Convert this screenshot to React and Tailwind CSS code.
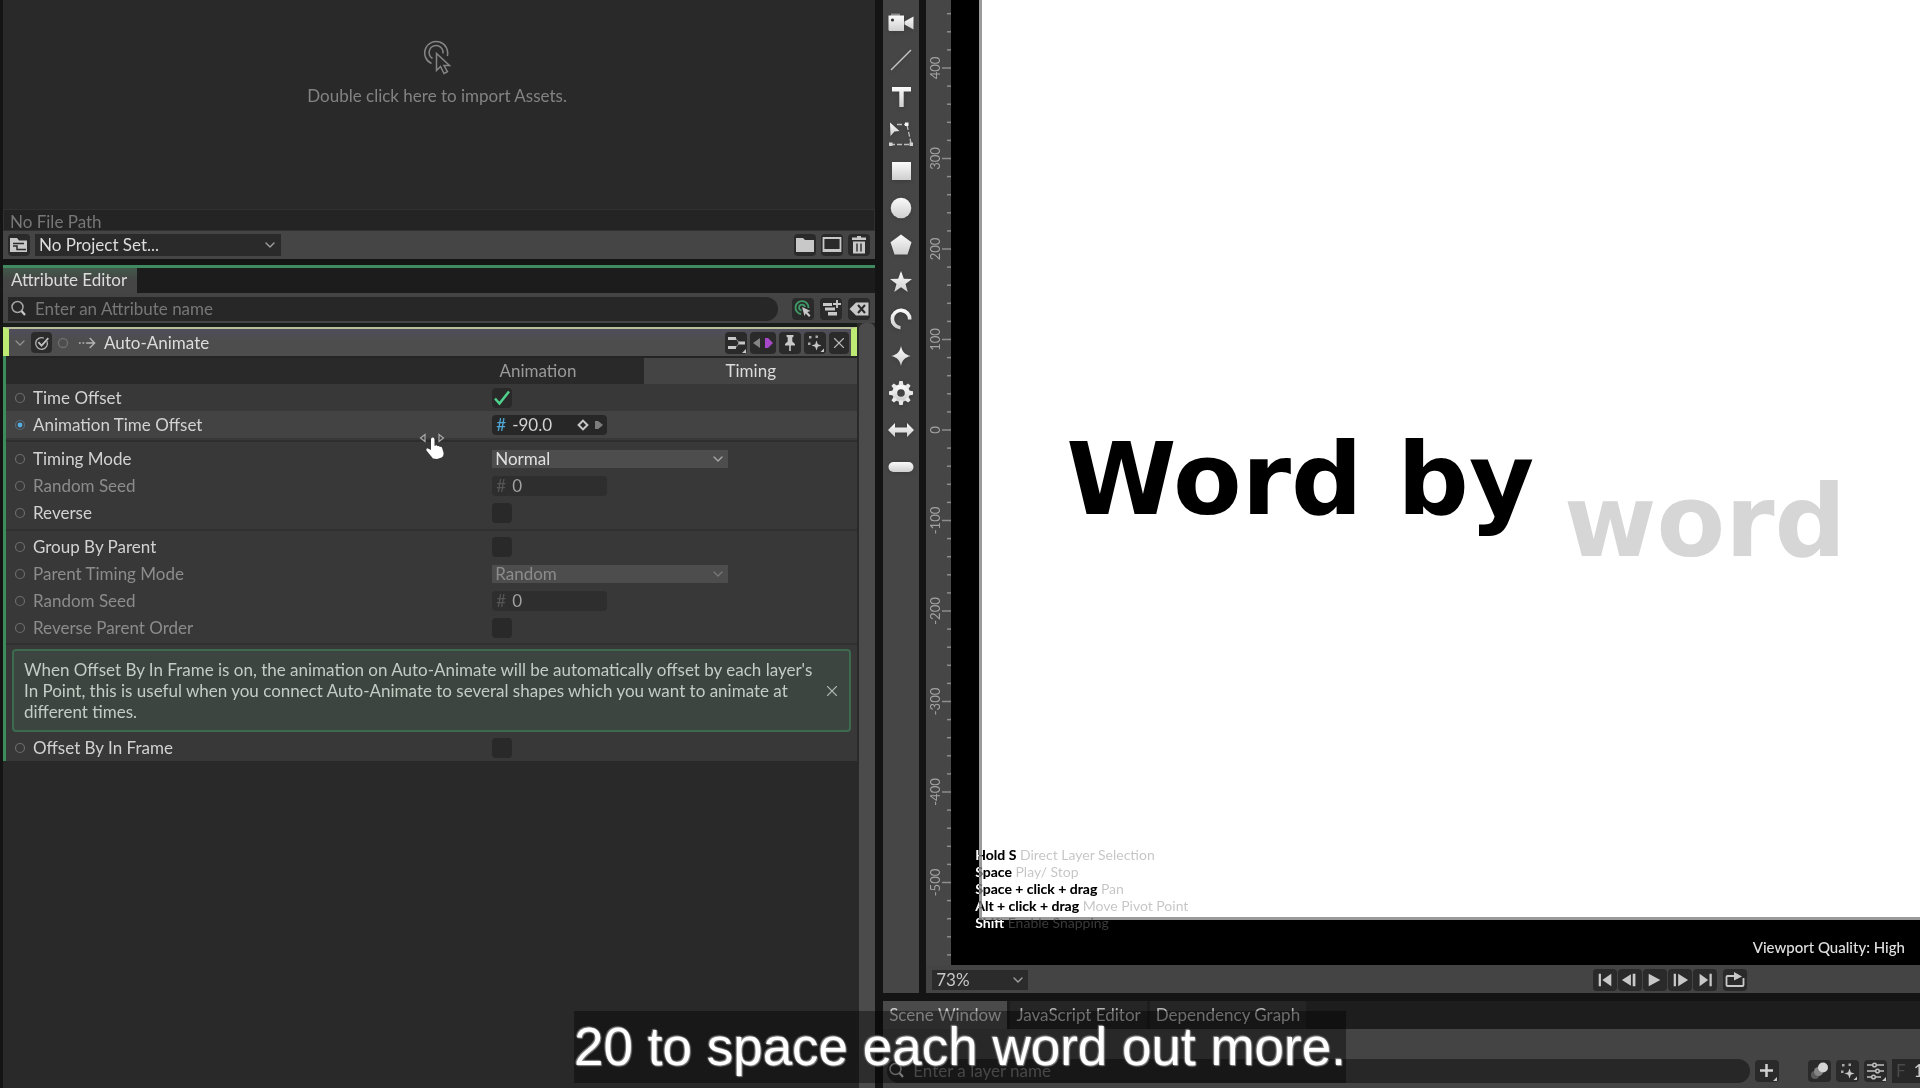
import React, { useState } from 'react';
import { ChevronDown, X } from 'lucide-react';

const hints = [
  { keys: 'Hold S', action: 'Direct Layer Selection' },
  { keys: 'Space', action: 'Play/ Stop' },
  { keys: 'Space + click + drag', action: 'Pan' },
  { keys: 'Alt + click + drag', action: 'Move Pivot Point' },
  { keys: 'Shift', action: 'Enable Snapping' },
];

const tools = [
  {
    name: 'Camera',
    shape: (
      <>
        <path d="M4 4.5h9v2.500H4z" fill="#8a8a8a" />
        <path d="M1.500 6.500h15.500v15.500H3a1.500 1.500 0 0 1-1.500-1.500z" />
        <path d="M17.500 12.500l9-5v13l-9-5z" />
        <circle cx="5.500" cy="11" r="1.600" fill="#333" />
      </>
    ),
  },
  { name: 'Line', shape: <path d="M4 24L24 4" stroke="#c4c4c4" strokeWidth="1.500" fill="none" /> },
  { name: 'Text', shape: <path d="M5 4h19v4.500h-7.300V24h-4.400V8.500H5z" /> },
  {
    name: 'Edit Shape',
    shape: (
      <>
        <path d="M3 2.500l9.500 8.500-5 .600L3.500 16z" />
        <path d="M10 4.500h8M20 5l4 18M3 24.500h21" stroke="#bdbdbd" strokeWidth="1.300" strokeDasharray="5 2" fill="none" />
        <path d="M18 2.500h3.500V6H18zM2 22.500h3.500V26H2zM22.500 22.500H26V26h-3.500z" />
      </>
    ),
  },
  { name: 'Rectangle', shape: <path d="M5 5h19v18H5z" /> },
  { name: 'Ellipse', shape: <circle cx="14" cy="14" r="10.300" /> },
  { name: 'Polygon', shape: <path d="M14 3.500l10.500 7.800-4 12.200h-13l-4-12.200z" /> },
  { name: 'Star', shape: <path d="M14 3l2.800 7.700 8.200.200-6.500 5 2.300 8L14 19.300 7.200 23.900l2.300-8-6.500-5 8.200-.200z" /> },
  {
    name: 'Arc',
    shape: <path d="M13.500 22.700A8.700 8.700 0 1 1 22.700 14.500" stroke="url(#toolFill)" strokeWidth="3.600" fill="none" />,
  },
  { name: 'Super Ellipse', shape: <path d="M14 4c1.200 5.500 3.500 8.600 9.800 10-6.300 1.400-8.600 4.500-9.800 10-1.200-5.500-3.500-8.600-9.800-10C10.500 12.600 12.800 9.500 14 4z" /> },
  {
    name: 'Cogwheel',
    shape: (
      <>
        <circle cx="14" cy="14" r="6.300" fill="none" stroke="url(#toolFill)" strokeWidth="5" />
        <path
          d="M12.300 2h3.400l.8 4.500h-5zM12.300 26h3.400l.8-4.500h-5zM2 12.300v3.400l4.500.8v-5zM26 12.300v3.400l-4.500.8v-5zM4.400 6.800l2.400-2.400 3.700 2.600-3.500 3.500zM23.600 6.800l-2.400-2.400-3.700 2.600 3.500 3.500zM4.400 21.200l2.400 2.400 3.700-2.600-3.500-3.500zM23.600 21.200l-2.400 2.400-3.700-2.600 3.500-3.500z"
          fill="#e9e9e9"
        />
      </>
    ),
  },
  { name: 'Arrow', shape: <path d="M1 14l7-7v4.500h12V7l7 7-7 7v-4.500H8V21z" /> },
  { name: 'Capsule', shape: <rect x="1.500" y="9" width="25" height="10" rx="5" /> },
];

const Icon = ({ children, size = 20, className = '' }) => (
  <svg width={size} height={size} viewBox="0 0 20 20" fill="#c8c8c8" className={`shrink-0 ${className}`} aria-hidden="true">
    {children}
  </svg>
);

const IconButton = ({ label, children, className = 'w-[22px]' }) => (
  <button
    type="button"
    aria-label={label}
    className={`flex h-[22px] shrink-0 items-center justify-center rounded bg-[#2a2a2a] hover:bg-[#333] ${className}`}
  >
    {children}
  </button>
);

const SparkleIcon = () => (
  <Icon>
    <path d="M4 3h2.500v2.500H4zM10.500 2.500H13V5h-2.500zM3 9.500h2.500V12H3z" fill="#a8a8a8" />
    <path d="M11.500 7.500l1.300 3.700 3.700 1.300-3.700 1.300-1.300 3.700-1.300-3.700-3.700-1.300 3.700-1.300z" />
    <path d="M19 15.500V19h-3.500z" />
  </Icon>
);

const SearchIcon = () => (
  <Icon>
    <circle cx="8.500" cy="8" r="5.500" fill="none" stroke="#a5a5a5" strokeWidth="1.500" />
    <path d="M12.500 12l3.500 4" stroke="#c8c8c8" strokeWidth="2.200" />
  </Icon>
);

const PortDot = ({ connected }) => (
  <Icon size={12}>
    <circle cx="10" cy="10" r="7.500" fill="none" stroke={connected ? '#52697a' : '#6c6c6c'} strokeWidth="2" />
    {connected && <circle cx="10" cy="10" r="4" fill="#55aee0" />}
  </Icon>
);

const Row = ({ id, label, disabled, highlighted, children }) => (
  <div className={`flex h-[27px] items-center gap-px ${highlighted ? 'bg-[#434343]' : ''}`}>
    <div className="flex w-[57%] items-center gap-[7px] pl-2">
      <PortDot connected={highlighted} />
      <label htmlFor={id} className={disabled ? 'text-[#8c8c8c]' : 'text-[#d2d2d2]'}>
        {label}
      </label>
    </div>
    {children}
  </div>
);

const CheckBox = ({ id, defaultChecked, disabled }) => {
  const [checked, setChecked] = useState(Boolean(defaultChecked));
  return (
    <span className="relative flex h-5 w-5">
      <input
        id={id}
        type="checkbox"
        checked={checked}
        disabled={disabled}
        onChange={(e) => setChecked(e.target.checked)}
        className="h-5 w-5 appearance-none rounded-sm bg-[#292929]"
      />
      {checked && (
        <svg viewBox="0 0 20 20" className="pointer-events-none absolute inset-0" aria-hidden="true">
          <path d="M3 10.500l4.500 5L17 3.500" fill="none" stroke="#4fd18b" strokeWidth="2.500" />
        </svg>
      )}
    </span>
  );
};

const NumberField = ({ id, value, disabled, keyed }) => (
  <div className={`flex h-5 w-[115px] items-center rounded-sm pl-1 ${disabled ? 'bg-[#2e2e2e]' : 'bg-[#272727]'}`}>
    <span className={`w-4 shrink-0 ${disabled ? 'text-[#555]' : 'text-[#4fa8d8]'}`}>#</span>
    <input
      id={id}
      type="text"
      defaultValue={value}
      disabled={disabled}
      className={`min-w-0 flex-1 bg-transparent outline-none ${disabled ? 'text-[#a0a0a0]' : 'text-[#d2d2d2]'}`}
    />
    {keyed && (
      <>
        <Icon size={16}>
          <path d="M10 4.500l5.500 5.500-5.500 5.500L4.500 10z" fill="none" stroke="#c8c8c8" strokeWidth="2.500" />
        </Icon>
        <Icon size={16}>
          <path d="M5 5h4l6 5-6 5H5z" fill="#7d7d7d" />
        </Icon>
      </>
    )}
  </div>
);

const SelectField = ({ id, value, disabled }) => (
  <div className="relative w-[236px]">
    <select
      id={id}
      defaultValue={value}
      disabled={disabled}
      className={`block h-[18px] w-full appearance-none bg-[#4d4d4d] pl-[3px] leading-[18px] opacity-100 outline-none ${
        disabled ? 'text-[#8c8c8c]' : 'text-[#e0e0e0]'
      }`}
    >
      <option>{value}</option>
    </select>
    <ChevronDown
      className={`pointer-events-none absolute right-[2px] top-px h-4 w-4 ${disabled ? 'text-[#777]' : 'text-[#a8a8a8]'}`}
    />
  </div>
);

const AssetsPanel = () => (
  <section className="flex flex-col">
    <div className="flex h-[209px] flex-col items-center bg-[#292929] pr-1 pt-10 text-[#838383]">
      <svg width="30" height="36" viewBox="0 0 30 36" fill="none" stroke="#858585" strokeWidth="1.500" aria-hidden="true">
        <path d="M9.500 23.500A11.500 11.500 0 1 1 25.300 16" />
        <path d="M10.500 18.500A7 7 0 1 1 21 13.500" />
        <path d="M14.500 13.500v17l4-4 3.500 7 3.500-1.800-3.500-6.200h5.500z" fill="#292929" />
      </svg>
      <p className="mt-2 leading-6">Double click here to import Assets.</p>
    </div>
    <p className="h-[22px] border border-[#313131] bg-[#242424] pl-[6px] leading-[24px] text-[#777]">No File Path</p>
    <div className="flex h-7 items-center gap-[5px] bg-[#454545] px-[5px]">
      <IconButton label="Project">
        <Icon>
          <path d="M1 3h7l2 2.500h8V17H1z" />
          <path d="M4 8.500h11M4 11h4v3.500h9" stroke="#2a2a2a" strokeWidth="1.500" fill="none" />
        </Icon>
      </IconButton>
      <div className="relative mr-auto w-[246px]">
        <select aria-label="Project" className="block h-[22px] w-full appearance-none bg-[#2a2a2a] pl-1 leading-[22px] text-[#dcdcdc] outline-none">
          <option>No Project Set...</option>
        </select>
        <ChevronDown className="pointer-events-none absolute right-[3px] top-[3px] h-4 w-4 text-[#a0a0a0]" />
      </div>
      <IconButton label="New folder">
        <Icon>
          <path d="M1 3h7l2 2h9v12H1z" />
        </Icon>
      </IconButton>
      <IconButton label="New composition">
        <Icon>
          <path d="M1.500 3h17v13h-17z" fill="none" stroke="#c8c8c8" strokeWidth="1.800" />
          <path d="M1 14h18v3H1z" />
        </Icon>
      </IconButton>
      <IconButton label="Delete">
        <Icon>
          <path d="M8 1h4v1.500h5V5H3V2.500h5zM4 6.500h12V18.500H4z" />
          <path d="M8 8.500v8M12 8.500v8" stroke="#2a2a2a" strokeWidth="1.400" />
        </Icon>
      </IconButton>
    </div>
  </section>
);

const AttributeHeader = () => (
  <div className="flex h-[29px] items-center border-x-[6px] border-t-2 border-x-[#bdea72] border-t-[#b9bd98] bg-gradient-to-b from-[#504d5b] to-[#4d4d4d] to-40%">
    <button type="button" aria-label="Collapse" className="ml-[3px]">
      <ChevronDown className="h-4 w-4 text-[#909090]" />
    </button>
    <button type="button" aria-label="Enabled" className="ml-[3px] flex h-[21px] w-[21px] items-center justify-center rounded-sm bg-[#2b2b2b]">
      <Icon size={18}>
        <path d="M15.500 8A6.500 6.500 0 1 1 12 4.500" fill="none" stroke="#b0b0b0" strokeWidth="1.500" />
        <path d="M6 9l3.500 4L17 4.500" fill="none" stroke="#c0c0c0" strokeWidth="2" />
      </Icon>
    </button>
    <Icon size={14} className="ml-1">
      <circle cx="10" cy="10" r="6.500" fill="none" stroke="#6d6d6d" strokeWidth="2" />
    </Icon>
    <Icon size={18} className="ml-2">
      <path d="M1 10h2M5 10h2M9 10h9M13 4.500l5.500 5.500-5.500 5.500" fill="none" stroke="#b4b4b4" strokeWidth="1.500" />
    </Icon>
    <h2 className="ml-2 mr-auto text-[#dcdcdc]">Auto-Animate</h2>
    <div className="flex gap-[3px] pr-[2px]">
      <IconButton label="Connections">
        <Icon>
          <path d="M2 5.500h8M2 14.500h8M12 10h7" stroke="#c8c8c8" strokeWidth="3" />
          <path d="M10 5.500l3 4.500-3 4.500" fill="none" stroke="#8a8a8a" />
          <path d="M20 16v4h-4z" />
        </Icon>
      </IconButton>
      <IconButton label="Previous or next keyframe" className="w-[26px]">
        <svg width="24" height="14" viewBox="0 0 24 14" aria-hidden="true">
          <path d="M9 2v10L2 7z" fill="#858585" />
          <path d="M14 2h3l5 5-5 5h-3z" fill="#a748c9" />
        </svg>
      </IconButton>
      <IconButton label="Pin">
        <Icon>
          <path d="M6.500 2h7v1.500l-1.200 1v4l2.700 2.500v1.500h-4.200V18H9.200v-5.500H5V11l2.700-2.500v-4l-1.200-1z" />
        </Icon>
      </IconButton>
      <IconButton label="Presets">
        <SparkleIcon />
      </IconButton>
      <IconButton label="Remove Auto-Animate" className="w-5">
        <X className="h-[18px] w-[18px] text-[#b8b8b8]" strokeWidth={1.5} />
      </IconButton>
    </div>
  </div>
);

const AttributeEditor = () => {
  const [tab, setTab] = useState('Timing');
  const [showInfo, setShowInfo] = useState(true);

  return (
    <section className="mt-[6px] flex min-h-0 flex-1 flex-col border-t-[3px] border-[#3f8a60]">
      <div className="flex h-[25px] bg-[#1c1c1c]">
        <h1 className="bg-gradient-to-b from-[#41594a] to-[#454545] to-50% pl-2 pr-[10px] leading-6 text-[#dcdcdc]">Attribute Editor</h1>
      </div>
      <div className="flex h-[30px] items-center gap-[6px] bg-[#444] px-[5px] pt-px">
        <div className="mr-2 flex h-6 flex-1 items-center gap-[6px] rounded-r-full bg-[#272727] pl-px">
          <SearchIcon />
          <input
            type="text"
            aria-label="Search attributes"
            placeholder="Enter an Attribute name"
            className="min-w-0 flex-1 bg-transparent outline-none placeholder:text-[#777]"
          />
        </div>
        <IconButton label="Follow selection">
          <Icon>
            <path d="M8 15A6.500 6.500 0 1 1 15.500 9M8.500 11.500A3 3 0 1 1 12 8" fill="none" stroke="#3f9a68" strokeWidth="1.800" />
            <path d="M9 8l8.500 4-3.200 1 3.200 3.500-1.500 1.500-3.300-3.400L11.500 17z" />
          </Icon>
        </IconButton>
        <IconButton label="Load selection">
          <Icon>
            <path d="M2 4h9v3H2zM4 8.500h10v3H4zM7 13h9v3.500H7z" />
            <path d="M16 1v8M12 5h8" stroke="#c8c8c8" strokeWidth="1.800" />
          </Icon>
        </IconButton>
        <IconButton label="Clear">
          <Icon>
            <path d="M7 3.500h12.500v13H7L.500 10z" />
            <path d="M9 6l7 8M16 6l-7 8" stroke="#2a2a2a" strokeWidth="2" />
          </Icon>
        </IconButton>
      </div>

      <div className="flex min-h-0 flex-1 bg-[#292929]">
        <div className="flex-1 border-t-4 border-[#191d19]">
          <AttributeHeader />
          <div className="border-l-[3px] border-[#3d8c5c] bg-[#383838]">
            <div className="flex h-7 justify-end border-t-2 border-[#242424] bg-[#292929]" role="tablist">
              {['Animation', 'Timing'].map((name) => (
                <button
                  key={name}
                  type="button"
                  role="tab"
                  aria-selected={tab === name}
                  onClick={() => setTab(name)}
                  className={`w-1/4 ${tab === name ? 'bg-[#444] text-[#dcdcdc]' : 'text-[#9a9a9a]'}`}
                >
                  {name}
                </button>
              ))}
            </div>

            <div className="border-b-2 border-[#2e2e2e] pb-[2px]">
              <Row id="time-offset" label="Time Offset">
                <CheckBox id="time-offset" defaultChecked />
              </Row>
              <Row id="animation-time-offset" label="Animation Time Offset" highlighted>
                <NumberField id="animation-time-offset" value="-90.0" keyed />
              </Row>
            </div>

            <div className="border-b-2 border-[#303030] py-[3px]">
              <Row id="timing-mode" label="Timing Mode">
                <SelectField id="timing-mode" value="Normal" />
              </Row>
              <Row id="random-seed" label="Random Seed" disabled>
                <NumberField id="random-seed" value="0" disabled />
              </Row>
              <Row id="reverse" label="Reverse">
                <CheckBox id="reverse" />
              </Row>
            </div>

            <div className="border-b-2 border-[#303030] py-[2px]">
              <Row id="group-by-parent" label="Group By Parent">
                <CheckBox id="group-by-parent" />
              </Row>
              <Row id="parent-timing-mode" label="Parent Timing Mode" disabled>
                <SelectField id="parent-timing-mode" value="Random" disabled />
              </Row>
              <Row id="parent-random-seed" label="Random Seed" disabled>
                <NumberField id="parent-random-seed" value="0" disabled />
              </Row>
              <Row id="reverse-parent-order" label="Reverse Parent Order" disabled>
                <CheckBox id="reverse-parent-order" disabled />
              </Row>
            </div>

            {showInfo && (
              <div className="mx-[6px] mb-[2px] mt-1 flex items-center justify-between rounded border-2 border-[#3d6b50] bg-[#3c453f] py-2 pl-[10px] pr-2">
                <p className="leading-[21px] text-[#c3ccc5]">
                  When Offset By In Frame is on, the animation on Auto-Animate will be automatically offset by each layer's
                  <br />
                  In Point, this is useful when you connect Auto-Animate to several shapes which you want to animate at
                  <br />
                  different times.
                </p>
                <button type="button" aria-label="Dismiss" onClick={() => setShowInfo(false)}>
                  <X className="h-[18px] w-[18px] text-[#aab5ad]" strokeWidth={1.5} />
                </button>
              </div>
            )}

            <Row id="offset-by-in-frame" label="Offset By In Frame">
              <CheckBox id="offset-by-in-frame" />
            </Row>
          </div>
        </div>
        <div className="ml-[2px] w-4 rounded-t-md bg-[#4b4b4b]" />
      </div>
    </section>
  );
};

const Toolbar = () => (
  <nav className="flex w-9 shrink-0 flex-col items-center bg-[#464646] pt-1">
    <svg width="0" height="0" className="absolute" aria-hidden="true">
      <linearGradient id="toolFill" x1="0" y1="0" x2="0" y2="1">
        <stop offset="0" stopColor="#fafafa" />
        <stop offset="1" stopColor="#cfcfcf" />
      </linearGradient>
    </svg>
    {tools.map((tool) => (
      <button key={tool.name} type="button" aria-label={tool.name} className="flex h-[37px] w-full items-center justify-center">
        <svg width="28" height="28" viewBox="0 0 28 28" fill="url(#toolFill)" className="drop-shadow-sm" aria-hidden="true">
          {tool.shape}
        </svg>
      </button>
    ))}
  </nav>
);

const zeroY = 430;
const unit = 90.5;

const Ruler = () => {
  const ticks = [];
  for (let i = -24; i <= 29; i += 1) {
    const y = zeroY + (i * unit) / 5;
    ticks.push(<path key={i} d={`M${i % 5 === 0 ? 16 : 21} ${y}h${i % 5 === 0 ? 9 : 4}`} stroke="#8d8d8d" strokeWidth="1.500" />);
  }
  return (
    <svg width="25" className="h-full w-[25px] shrink-0 bg-[#464646]" aria-hidden="true">
      {ticks}
      {[400, 300, 200, 100, 0, -100, -200, -300, -400, -500].map((value) => {
        const y = zeroY - (value * unit) / 100;
        return (
          <text
            key={value}
            x="9"
            y={y}
            transform={`rotate(-90 9 ${y})`}
            textAnchor="middle"
            dominantBaseline="central"
            fill="#a3a3a3"
            fontSize="13"
          >
            {value}
          </text>
        );
      })}
    </svg>
  );
};

const Viewport = () => (
  <div className="relative min-w-0 flex-1 overflow-hidden bg-black pb-[45px] pl-7">
    <div className="flex h-full items-start border-b-[3px] border-l-[3px] border-[#9a9a9a] bg-white pl-[84px] pt-[420px] font-['DejaVu_Sans',sans-serif] text-[100px] font-bold leading-[120px]">
      <span className="whitespace-nowrap text-black">Word by</span>
      <span className="ml-[30px] mt-[42px] text-[#d6d6d6]">word</span>
    </div>
    {/* shortcuts drawn inverted against whatever is under them */}
    <ul className="absolute bottom-[34px] left-6 text-[14px] leading-[17px] text-[#3a3a3a] mix-blend-difference">
      {hints.map((hint) => (
        <li key={hint.keys}>
          <span className="font-bold text-white">{hint.keys}</span> {hint.action}
        </li>
      ))}
    </ul>
    <p className="absolute bottom-2 right-[15px] text-[15px] font-medium leading-5 text-[#e0e0e0]">Viewport Quality: High</p>
  </div>
);

const transport = [
  { label: 'Go to start', d: 'M3 3h2.500v14H3zM17 3v14l-10-7z' },
  { label: 'Previous frame', d: 'M1 10l10-6.500v13zM13 3h3v14h-3z' },
  { label: 'Play', d: 'M3 3l13 7-13 7z' },
  { label: 'Next frame', d: 'M3 3h2.500v14H3zM8 3l11 7-11 7z' },
  { label: 'Go to end', d: 'M4 3l9.500 7L4 17zM15 3h2.500v14H15z' },
];

const TransportBar = () => (
  <div className="flex h-7 items-center bg-[#444] pl-[6px] pt-px">
    <div className="relative w-24">
      <select aria-label="Zoom" className="block h-5 w-full appearance-none bg-[#2b2b2b] pl-1 leading-5 text-[#c8c8c8] outline-none">
        <option>73%</option>
      </select>
      <ChevronDown className="pointer-events-none absolute right-[2px] top-[2px] h-4 w-4 text-[#a0a0a0]" />
    </div>
    <div className="ml-auto mr-[6px] flex gap-px">
      {transport.map((item) => (
        <IconButton key={item.label} label={item.label} className="w-6">
          <Icon size={18}>
            <path d={item.d} />
          </Icon>
        </IconButton>
      ))}
    </div>
    <IconButton label="Loop" className="mr-[173px] w-6">
      <Icon>
        <path d="M9 6H2.500Q1.500 6 1.500 7v8q0 1 1 1h15q1 0 1-1V8" fill="none" stroke="#c8c8c8" strokeWidth="1.800" />
        <path d="M9 2l8 4.500-8 4z" />
      </Icon>
    </IconButton>
  </div>
);

const ScenePanel = () => (
  <section className="mt-2 h-[87px] shrink-0 overflow-hidden bg-[#444]">
    <div className="flex h-7 bg-[#1d1d1d]" role="tablist">
      {['Scene Window', 'JavaScript Editor', 'Dependency Graph'].map((name, index) => (
        <button
          key={name}
          type="button"
          role="tab"
          aria-selected={index === 0}
          className={`mr-[3px] px-[6px] ${index === 0 ? 'bg-[#4a4a4a] text-[#d0d0d0]' : 'bg-[#252525] text-[#b4b4b4]'}`}
        >
          {name}
        </button>
      ))}
    </div>
    <div className="mt-[30px] flex h-6 items-center gap-[5px]">
      <div className="ml-1 flex h-6 flex-1 items-center gap-[6px] rounded-full bg-[#272727]">
        <SearchIcon />
        <input
          type="text"
          aria-label="Search layers"
          placeholder="Enter a layer name"
          className="min-w-0 flex-1 bg-transparent outline-none placeholder:text-[#777]"
        />
      </div>
      <IconButton label="Add layer" className="mr-6 w-6">
        <Icon>
          <path d="M9.500 3v13M3 9.500h13" stroke="#d0d0d0" strokeWidth="2.500" />
          <path d="M20 16v4h-4z" />
        </Icon>
      </IconButton>
      <IconButton label="Motion blur" className="w-[23px]">
        <Icon>
          <circle cx="5" cy="14" r="4" fill="#5c5c5c" />
          <circle cx="8.500" cy="10.500" r="4.500" fill="#858585" />
          <circle cx="13" cy="6.500" r="5" fill="#d4d4d4" />
        </Icon>
      </IconButton>
      <IconButton label="Layer presets" className="w-[23px]">
        <SparkleIcon />
      </IconButton>
      <IconButton label="Filters" className="w-[23px]">
        <Icon>
          <path d="M1 4h5M11 4h7M1 10h8M14 10h4M1 16h4M10 16h5" stroke="#c0c0c0" strokeWidth="1.500" />
          <g fill="none" stroke="#c0c0c0" strokeWidth="1.500">
            <circle cx="8.500" cy="4" r="1.800" />
            <circle cx="11.500" cy="10" r="1.800" />
            <circle cx="7.500" cy="16" r="1.800" />
          </g>
          <path d="M20 16v4h-4z" />
        </Icon>
      </IconButton>
      <label className="flex h-6 w-7 items-center gap-2 bg-[#272727] pl-1 text-[#4a4a4a]">
        F
        <input type="text" defaultValue="1" className="w-2 bg-transparent text-[#c8c8c8] outline-none" />
      </label>
    </div>
  </section>
);

const App = () => (
  <div className="relative flex h-screen w-full overflow-hidden bg-[#141414] font-['Lato',sans-serif] text-[17px] leading-5">
    <div className="flex w-[46%] shrink-0 flex-col pl-[3px] pr-2">
      <AssetsPanel />
      <AttributeEditor />
    </div>

    <div className="flex min-w-0 flex-1 flex-col">
      <div className="flex min-h-0 flex-1 gap-[7px]">
        <Toolbar />
        <div className="flex min-w-0 flex-1 flex-col">
          <div className="flex min-h-0 flex-1">
            <Ruler />
            <Viewport />
          </div>
          <TransportBar />
        </div>
      </div>
      <ScenePanel />
    </div>

    {/* scrub cursor */}
    <svg width="32" height="32" viewBox="0 0 32 32" className="pointer-events-none absolute left-[418px] top-[431px]" aria-hidden="true">
      <path d="M7 3.500v7L2.500 7zM21 3.500v7L25.500 7z" fill="none" stroke="#a8a8a8" strokeWidth="1.200" />
      <path
        d="M13 8.500q0-2 1.700-2t1.800 2V15l1-.500q1.500-.700 2 .800 1.600-.900 2.300.700 1.700-.600 2.300 1l1.400 4.500q.500 3.500-2 5l-4.500 1.500-4-.500-6.500-8q-.800-1.800 1-2.300L13 19z"
        fill="#fff"
      />
    </svg>

    <p className="pointer-events-none absolute bottom-[5px] left-1/2 -translate-x-1/2 whitespace-nowrap bg-black/40 font-['Liberation_Sans',sans-serif] text-[53px] leading-[72px] text-white [text-shadow:0_0_2px_#888,0_0_2px_#888,1px_1px_1px_#777,-1px_-1px_1px_#777]">
      20 to space each word out more.
    </p>
  </div>
);

export default App;
